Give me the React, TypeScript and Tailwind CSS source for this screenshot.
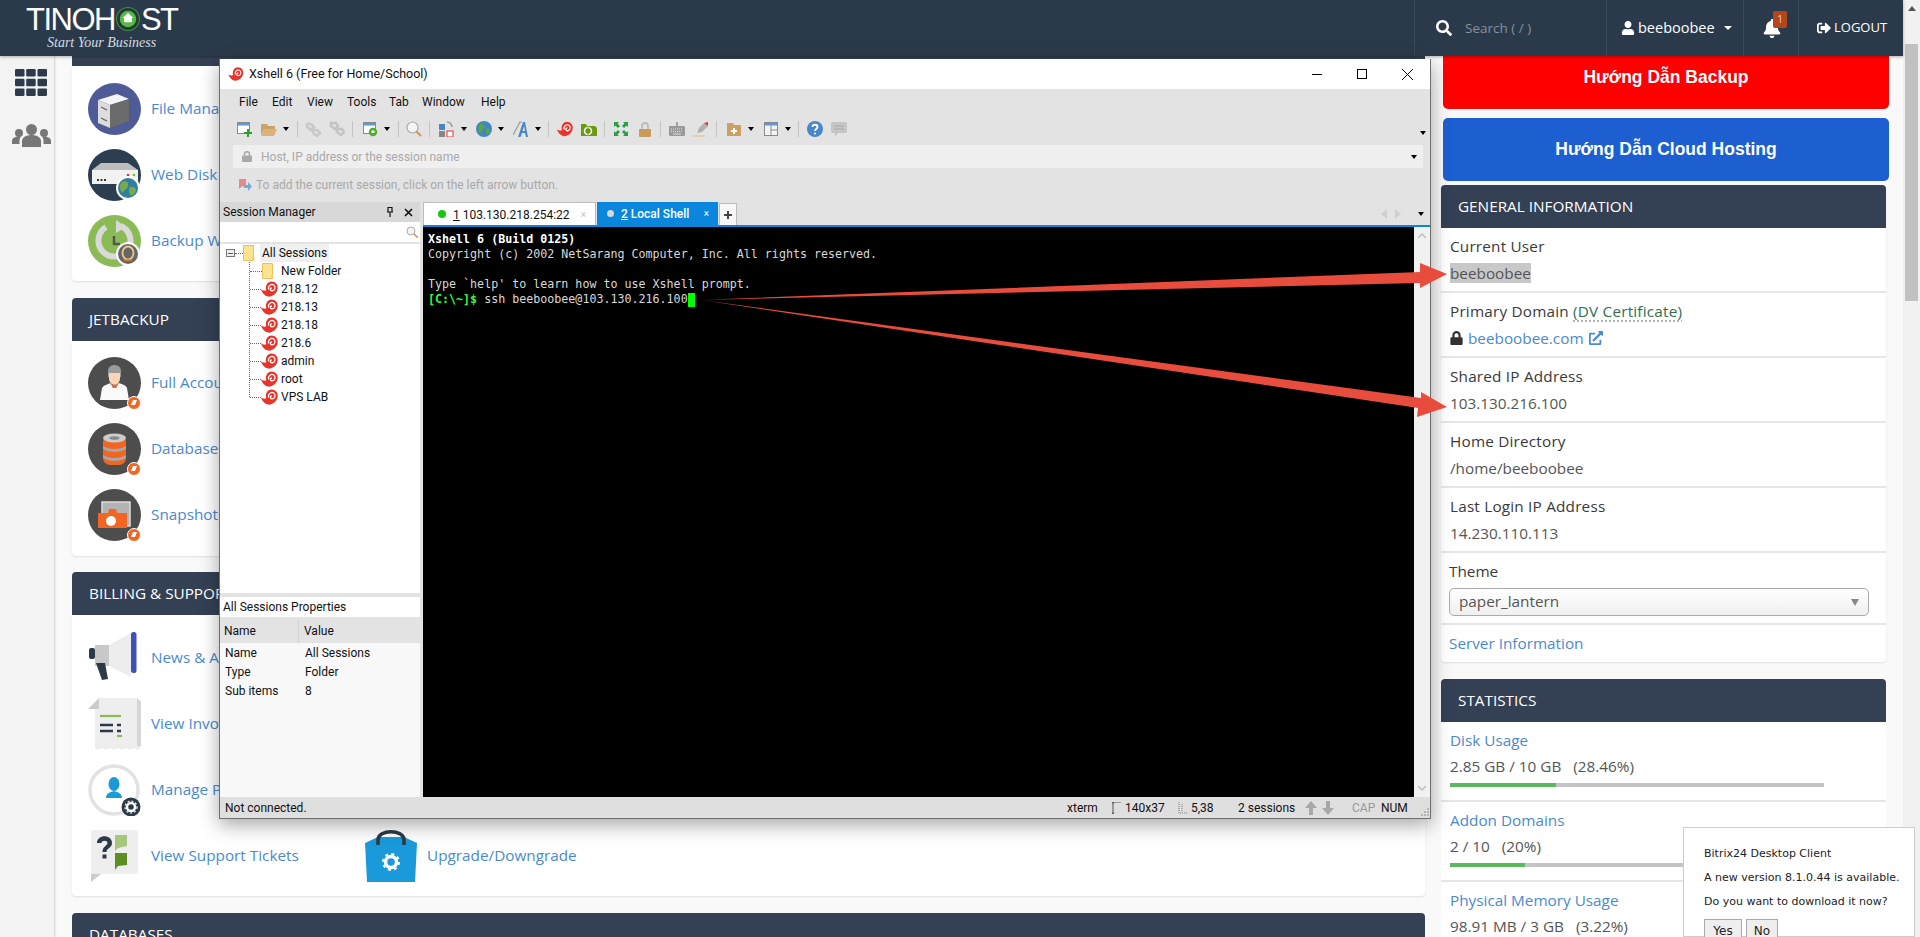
import React from "react";
import { FaSearch, FaUser, FaBell, FaSignOutAlt, FaLock, FaExternalLinkAlt } from "react-icons/fa";

const Snail = ({ className = "w-[16px] h-[16px]" }: { className?: string }) => (
  <svg viewBox="0 2 48 45" className={className}>
    <path fill="#e8352b" d="M0 26C8 30 12 30 15 28C11 18 17 3 30 3C42 3 49 14 47 24C45 38 32 47 20 46C10 44 3 36 0 26Z" />
    <path fill="none" stroke="#fff" strokeWidth="3.5" d="M22 26C18 16 29 9 36 13C43 18 39 30 31 30C25 30 25 21 31 21" />
  </svg>
);
const Folder = ({ className = "" }: { className?: string }) => (
  <svg viewBox="0 0 12 16" className={className}>
    <path fill="#fde28f" stroke="#e8c35c" strokeWidth="1" d="M.5.5h10v15H.5z" />
    <path fill="#f2cf6b" d="M9 12h2.5v3.5H9z" />
  </svg>
);
const Caret = () => <span className="block w-0 h-0 shrink-0 border-x-[3px] border-t-[4px] border-x-transparent border-t-black" />;
const Sep = () => <span className="block w-px h-[16px] shrink-0 bg-[#c4c4c4]" />;

const Frame = ({ children, className = "w-[53px] h-[52px]", vb = "0 0 53 52" }: { children: React.ReactNode; className?: string; vb?: string }) => (
  <svg viewBox={vb} className={"shrink-0 " + className}>{children}</svg>
);
const OrangeBadge = () => (
  <g>
    <circle cx="46" cy="46" r="6.5" fill="#f26522" stroke="#fff" strokeWidth="1" />
    <path d="M43 48l2-5h4l-2 5z" fill="#fff" />
  </g>
);
const FileMgr = () => (
  <Frame>
    <ellipse cx="26.5" cy="26" rx="26.5" ry="26" fill="#4f5b96" />
    <path d="M10 17l19-6 12 5-19 6z" fill="#f4f4f4" />
    <path d="M10 17l12 5v23l-12-5z" fill="#dcdcdc" />
    <path d="M22 22l19-6v22l-19 7z" fill="#6b6b6b" />
    <path d="M13 24l6 3M13 35l6 3" stroke="#666" strokeWidth="1.3" />
  </Frame>
);
const WebDisk = () => (
  <Frame>
    <ellipse cx="26.5" cy="26" rx="26.5" ry="26" fill="#2c3e50" />
    <path d="M4 21l9-7h27l10 7z" fill="#bdbdbd" />
    <rect x="4" y="21" width="46" height="14" fill="#f1f1f1" />
    <path d="M9 31h2M12.500 31h2M16 31h2" stroke="#333" strokeWidth="2" />
    <circle cx="40" cy="26" r="1.300" fill="#d33" /><circle cx="46" cy="26" r="1.300" fill="#7b3" />
    <circle cx="40" cy="39" r="12" fill="#fff" />
    <circle cx="40" cy="39" r="10" fill="#2f7f9f" />
    <path d="M34 33c4-2 7 0 6 4s-4 3-5 7c-3-2-5-7-1-11zM42 38c3-1 6 0 6 3s-3 5-5 6c-2-3-3-6-1-9z" fill="#7aa84e" />
  </Frame>
);
const Backup = () => (
  <Frame>
    <ellipse cx="26.5" cy="26" rx="26.5" ry="26" fill="#8abb55" />
    <path d="M33 11a16 16 0 1 1-15 1" fill="none" stroke="#d9d9d9" strokeWidth="6" />
    <path d="M28 5l10 7-10 6z" fill="#d9d9d9" />
    <circle cx="26.500" cy="27" r="9" fill="#8abb55" />
    <path d="M26 21v8h6" fill="none" stroke="#555" strokeWidth="2.500" />
    <circle cx="40" cy="39" r="12" fill="#fff" />
    <circle cx="40" cy="39" r="10" fill="#666" />
    <ellipse cx="40" cy="38" rx="5.500" ry="6.500" fill="none" stroke="#e8c88a" strokeWidth="1.800" />
    <path d="M36 45h8" stroke="#e67e22" strokeWidth="1.500" />
  </Frame>
);
const Account = () => (
  <Frame>
    <ellipse cx="26.500" cy="26" rx="26.500" ry="26" fill="#4d4d4d" />
    <path d="M20 14c0-8 13-8 13 0v6H20z" fill="#9a9a9a" />
    <path d="M21 16h11v5c0 9-11 9-11 0z" fill="#fbd5b5" />
    <path d="M12 43l2-12c2-3 7-4 8-5l4 3 5-3c2 1 7 2 8 5l2 12z" fill="#fafafa" />
    <path d="M22 26l4 3 5-3-3 5h-3z" fill="#e8622c" />
    <OrangeBadge />
  </Frame>
);
const Database = () => (
  <Frame>
    <ellipse cx="26.500" cy="26" rx="26.500" ry="26" fill="#4d4d4d" />
    <rect x="15" y="12" width="23" height="30" rx="7" fill="#f26522" />
    <ellipse cx="26.500" cy="15" rx="11.500" ry="4.500" fill="#ccc" />
    <ellipse cx="26.500" cy="15" rx="5" ry="1.800" fill="#888" />
    <path d="M15 23c6 4 17 4 23 0v3c-6 4-17 4-23 0zM15 32c6 4 17 4 23 0v3c-6 4-17 4-23 0z" fill="#a7a7a7" />
    <OrangeBadge />
  </Frame>
);
const Snapshot = () => (
  <Frame>
    <ellipse cx="26.500" cy="26" rx="26.500" ry="26" fill="#4d4d4d" />
    <rect x="14" y="13" width="28" height="24" fill="#b3b3b3" stroke="#ddd" strokeWidth="1.500" />
    <path d="M10 24h10l1-4h7l1 4h10v15H10z" fill="#f26522" />
    <circle cx="23" cy="32" r="5" fill="#fff" />
    <OrangeBadge />
  </Frame>
);
const News = () => (
  <Frame>
    <path d="M7 13h14v21H7z" fill="#c8c8c8" />
    <path d="M21 13L43 1v44L21 34z" fill="#ededed" />
    <rect x="43" y="0" width="5.500" height="41" rx="2.500" fill="#3f51b5" />
    <rect x="1" y="16" width="6" height="11" rx="2" fill="#2c3a47" />
    <path d="M8 31h9l3 16-6 1z" fill="#2c3a47" />
  </Frame>
);
const Invoice = () => (
  <Frame>
    <path d="M11 0h38l4 3v46l-3 3-4-2-4 2-4-2-4 2-4-2-4 2-4-2-4 2-4-2-4 2-3-2V11z" fill="#eee" />
    <path d="M0 11L11 0v11z" fill="#ccc" />
    <path d="M49 0l4 4v44h-4z" fill="#d6d6d6" />
    <path d="M12 18h21" stroke="#8abb55" strokeWidth="2.200" />
    <path d="M12 27h13M12 33h13" stroke="#2c3a47" strokeWidth="2.500" />
    <path d="M29 27h5M29 33h5" stroke="#2c3a47" strokeWidth="2.500" strokeDasharray="4 1" />
    <path d="M29 38h5" stroke="#8abb55" strokeWidth="2.200" />
  </Frame>
);
const Profile = () => (
  <Frame>
    <circle cx="26" cy="26" r="24" fill="#fff" stroke="#e2e2e2" strokeWidth="3.500" />
    <ellipse cx="26" cy="20" rx="5.500" ry="7" fill="#1c9ad6" />
    <path d="M18 34c0-5 5-6 8-7 3 1 8 2 8 7z" fill="#1c9ad6" />
    <circle cx="43" cy="43" r="9.500" fill="#2c3a47" />
    <circle cx="43" cy="43" r="4" fill="none" stroke="#fff" strokeWidth="2.500" />
    <circle cx="43" cy="43" r="6" fill="none" stroke="#fff" strokeWidth="1.200" strokeDasharray="2 2" />
  </Frame>
);
const Ticket = () => (
  <Frame>
    <rect x="3" y="0" width="47" height="44" rx="2" fill="#eee" />
    <path d="M3 44h10L3 52z" fill="#ccc" />
    <path d="M9 13c0-9 15-9 15 0 0 5-5.500 5-5.500 9h-4c0-6 5-6 5-9 0-3-6-3-6 0zM14.500 24.500h4v4h-4z" fill="#2c3a47" />
    <path d="M27 5h12v11l-9 2-3 3z" fill="#a5c87c" />
    <path d="M27 23h12v12l-9 1-3 4z" fill="#5b8f22" />
  </Frame>
);
const Bag = () => (
  <Frame className="w-[54px] h-[52px]" vb="0 0 54 52">
    <path d="M1 13L14 7h26l13 6-2 39H3z" fill="#1a9ada" />
    <path d="M14 15V10c0-11 26-11 26 0v5" fill="none" stroke="#2c3a47" strokeWidth="3.500" />
    <circle cx="27" cy="32" r="5.500" fill="none" stroke="#fff" strokeWidth="3.500" />
    <circle cx="27" cy="32" r="8" fill="none" stroke="#fff" strokeWidth="2" strokeDasharray="3 3.300" />
  </Frame>
);

const IconRow = ({ icon, label, extra }: { icon: React.ReactNode; label: string; extra?: React.ReactNode }) => (
  <div className="flex items-center h-[52px] text-[#4a8acd]">
    <div className="flex items-center gap-[10px] w-[276px] shrink-0">
      {icon}
      <span className="pb-[2px]">{label}</span>
    </div>
    {extra}
  </div>
);

const PanelHead = ({ title, children }: { title: string; children?: React.ReactNode }) => (
  <div className="flex items-center justify-between h-[43px] bg-[#344154] text-white rounded-t-[4px] pl-[17px]">
    <span>{title}</span>
    {children}
  </div>
);

const InfoRow = ({ label, children }: { label: React.ReactNode; children: React.ReactNode }) => (
  <div className="h-[65px] border-b-2 border-[#e6e6e6] px-[9px] pt-[8px] flex flex-col gap-[7px]">
    <div className="h-[20px] leading-[20px] text-[#3a3a3a] font-medium tracking-[0.2px]">{label}</div>
    <div className="h-[20px] leading-[20px] text-[#555] flex items-center">{children}</div>
  </div>
);

const Stat = ({ title, value, pct, bar }: { title: string; value: string; pct: string; bar?: React.ReactNode }) => (
  <div className={"h-[80px] px-[9px] pt-[8px] " + (bar ? "border-b-2 border-[#e6e6e6]" : "")}>
    <div className="h-[20px] leading-[20px] text-[#4a8acd]">{title}</div>
    <div className="h-[20px] leading-[20px] mt-[6px] text-[#555] flex gap-[12px]"><span>{value}</span><span>{pct}</span></div>
    {bar}
  </div>
);

const Bar = ({ widthClass }: { widthClass: string }) => (
  <div className="h-[4px] w-[374px] mt-[7px] bg-[#c4c4c4]"><div className={"h-full bg-[#5cb85c] " + widthClass} /></div>
);

const Tree = ({ label }: { label: string }) => (
  <div className="flex items-center h-[18px]">
    <span className="w-[11px] border-t border-dotted border-[#666] shrink-0" />
    <Snail className="w-[17px] h-[16px] shrink-0" />
    <span className="ml-[3px]">{label}</span>
  </div>
);

const Toolbar = () => (
  <div className="h-[29px] flex items-center pb-[3px]">
    <svg viewBox="0 0 15 15" className="ml-[17px] w-[15px] h-[15px]"><rect x=".5" y=".5" width="12" height="11" fill="#fff" stroke="#8a8a8a" /><rect x="1" y="1" width="11" height="2.500" fill="#5b9bd5" /><path d="M11 7v8M7 11h8" stroke="#2aa02a" strokeWidth="2" /></svg>
    <svg viewBox="0 0 16 13" className="ml-[9px] w-[16px] h-[13px]"><path d="M0 1h6l1 2h7v3H3L0 12z" fill="#c9a16a" /><path d="M3 6h13l-3 7H0z" fill="#dcb27a" /></svg>
    <span className="ml-[6px]"><Caret /></span>
    <span className="ml-[8px]"><Sep /></span>
    <svg viewBox="0 0 16 16" className="ml-[7px] w-[16px] h-[16px]"><path d="M2 3l4 0 3 3-3 3-4-3zM8 9l4 0 3 3-3 3-4-3z" fill="none" stroke="#c8c8c8" strokeWidth="2.500" /></svg>
    <svg viewBox="0 0 16 16" className="ml-[8px] w-[16px] h-[16px]"><path d="M2 2l5 0 2 3-3 3-4-3zM8 8l5 0 2 3-3 3-4-3z" fill="none" stroke="#c4c4c4" strokeWidth="2.500" /></svg>
    <span className="ml-[7px]"><Sep /></span>
    <svg viewBox="0 0 15 15" className="ml-[10px] w-[15px] h-[15px]"><rect x=".5" y=".5" width="12" height="11" fill="#fff" stroke="#8a8a8a" /><rect x="1" y="1" width="11" height="2.500" fill="#5b9bd5" /><circle cx="10" cy="10" r="3" fill="none" stroke="#4caf2a" strokeWidth="2.500" /></svg>
    <span className="ml-[6px]"><Caret /></span>
    <span className="ml-[8px]"><Sep /></span>
    <svg viewBox="0 0 16 16" className="ml-[7px] w-[16px] h-[16px]"><circle cx="6.500" cy="6.500" r="5.500" fill="#f4f4f4" stroke="#aaa" strokeWidth="1.200" /><path d="M10.500 10.500L15 15" stroke="#d49a55" strokeWidth="2.200" /></svg>
    <span className="ml-[7px]"><Sep /></span>
    <svg viewBox="0 0 15 16" className="ml-[9px] w-[15px] h-[16px]"><rect x="0" y="3" width="6" height="6" fill="#4a87c8" /><rect x="0" y="10" width="6" height="6" fill="#888" /><rect x="8" y="10" width="6" height="6" fill="#fff" stroke="#d33" /><path d="M8 1a5 5 0 0 1 5 5" fill="none" stroke="#999" strokeWidth="1.500" /></svg>
    <span className="ml-[7px]"><Caret /></span>
    <svg viewBox="0 0 16 16" className="ml-[9px] w-[16px] h-[16px]"><circle cx="8" cy="8" r="8" fill="#3f86c9" /><path d="M4 3c3-1 5 1 4 4s-3 2-3 6c-3-2-4-7-1-10zM11 7c2 0 3 1 3 3s-2 3-3 4c-1-2-2-5 0-7z" fill="#59a545" /></svg>
    <span className="ml-[6px]"><Caret /></span>
    <svg viewBox="0 0 16 16" className="ml-[9px] w-[16px] h-[16px]"><path d="M0 14L7 1h2" fill="none" stroke="#999" strokeWidth="1.200" /><path d="M5 16L10 1h2l3 15h-2l-1-4H9l-1.500 4zM9.500 10h2.500L11.200 5z" fill="#4a87c8" /></svg>
    <span className="ml-[6px]"><Caret /></span>
    <span className="ml-[7px]"><Sep /></span>
    <span className="ml-[8px]"><Snail /></span>
    <svg viewBox="0 0 16 13" className="ml-[8px] w-[16px] h-[13px]"><path d="M0 1h5l1 2h8l2 2v8H0z" fill="#6a9a12" /><circle cx="7" cy="8" r="3.500" fill="none" stroke="#fff" strokeWidth="1.500" /><path d="M7 4v8" stroke="#6a9a12" strokeWidth="1" /></svg>
    <span className="ml-[7px]"><Sep /></span>
    <svg viewBox="0 0 14 14" className="ml-[9px] w-[14px] h-[14px]" fill="#27a042"><path d="M0 0h5L3.500 1.500 6 4 4 6 1.500 3.500 0 5zM14 0v5l-1.500-1.500L10 6 8 4l2.500-2.500L9 0zM0 14V9l1.500 1.500L4 8l2 2-2.500 2.500L5 14zM14 14H9l1.500-1.500L8 10l2-2 2.500 2.500L14 9z" /></svg>
    <svg viewBox="0 0 12 15" className="ml-[11px] w-[12px] h-[15px]"><path d="M3 7V4c0-4 6-4 6 0v3" fill="none" stroke="#bbb" strokeWidth="1.800" /><rect x="0" y="7" width="12" height="8" rx="1" fill="#c89a5c" /></svg>
    <span className="ml-[9px]"><Sep /></span>
    <svg viewBox="0 0 16 14" className="ml-[8px] w-[16px] h-[14px]"><path d="M8 0v4" stroke="#777" strokeWidth="1.200" /><rect x="0" y="4" width="16" height="10" rx="1" fill="#9a9a9a" /><path d="M2 7h12M2 9.500h12" stroke="#e3e3e3" strokeDasharray="1 1" /><path d="M4 12h8" stroke="#e3e3e3" /></svg>
    <svg viewBox="0 0 16 15" className="ml-[8px] w-[16px] h-[15px]"><path d="M4 11l2-5 5-5 4 3-6 6z" fill="#b0b0b0" /><path d="M11 1l4-1v4z" fill="#e0303a" /><path d="M0 14h12" stroke="#eec27e" strokeWidth="1.200" /></svg>
    <span className="ml-[7px]"><Sep /></span>
    <svg viewBox="0 0 14 13" className="ml-[10px] w-[14px] h-[13px]"><path d="M0 0h6l1 2h7v11H0z" fill="#cc9f62" /><path d="M7 5v6M4 8h6" stroke="#fff" strokeWidth="2" /></svg>
    <span className="ml-[7px]"><Caret /></span>
    <svg viewBox="0 0 14 14" className="ml-[10px] w-[14px] h-[14px]"><rect x=".5" y=".5" width="13" height="13" fill="#f4f4f4" stroke="#8a8a8a" /><rect x="1" y="1" width="12" height="2.500" fill="#5b9bd5" /><path d="M7 3v10M7 8h6" stroke="#8a8a8a" /></svg>
    <span className="ml-[7px]"><Caret /></span>
    <span className="ml-[7px]"><Sep /></span>
    <svg viewBox="0 0 16 16" className="ml-[8px] w-[16px] h-[16px]"><circle cx="8" cy="8" r="8" fill="#4a87c8" /><path d="M5.500 6c0-3 5-3 5 0 0 2-2.500 2-2.500 4" fill="none" stroke="#fff" strokeWidth="1.800" /><circle cx="8" cy="12.500" r="1.100" fill="#fff" /></svg>
    <svg viewBox="0 0 16 15" className="ml-[8px] w-[16px] h-[15px]"><path d="M1 0h14l1 1v9l-1 1H7l-3 4v-4H1l-1-1V1z" fill="#c6c6c6" /><path d="M3 4h10M3 7h10" stroke="#a8a8a8" strokeWidth="1.200" /></svg>
    <span className="ml-auto mr-[4px] mt-[8px]"><Caret /></span>
  </div>
);

const XshellWindow = () => (
  <div className="absolute left-[219px] top-[59px] w-[1212px] h-[760px] z-20 bg-[#e3e3e3] border-x border-b border-[#6f6f6f] shadow-[0_6px_18px_rgba(0,0,0,0.35)] flex flex-col font-['Roboto'] text-[12px] text-[#111]">
    <div className="h-[30px] bg-white flex items-center shrink-0">
      <Snail className="ml-[8px] w-[16px] h-[14px]" />
      <span className="ml-[5px] text-[12.500px]">Xshell 6 (Free for Home/School)</span>
      <div className="ml-auto flex items-center mr-[17px] gap-[35px]">
        <span className="w-[10px] h-px bg-black" />
        <span className="w-[10px] h-[10px] border border-black" />
        <svg viewBox="0 0 11 11" className="w-[11px] h-[11px]"><path d="M0 0l11 11M11 0L0 11" stroke="#000" strokeWidth="1" /></svg>
      </div>
    </div>
    <div className="h-[27px] flex items-center pl-[19px] pb-[2px] shrink-0">
      <span className="w-[33px]">File</span>
      <span className="w-[35px]">Edit</span>
      <span className="w-[40px]">View</span>
      <span className="w-[42px]">Tools</span>
      <span className="w-[33px]">Tab</span>
      <span className="w-[59px]">Window</span>
      <span>Help</span>
    </div>
    <Toolbar />
    <div className="h-[23px] ml-[13px] mr-[7px] bg-[#efefef] flex items-center text-[#a9a9a9] shrink-0">
      <svg viewBox="0 0 10 11" className="ml-[9px] w-[10px] h-[11px]"><path d="M2.500 5V3c0-3 5-3 5 0v2" fill="none" stroke="#a9a9a9" strokeWidth="1.500" /><rect y="4.500" width="10" height="6.500" rx="1" fill="#a9a9a9" /></svg>
      <span className="ml-[9px]">Host, IP address or the session name</span>
      <span className="ml-auto mr-[6px]"><Caret /></span>
    </div>
    <div className="h-[34px] flex items-center text-[#a9a9a9] shrink-0">
      <svg viewBox="0 0 13 13" className="ml-[19px] w-[13px] h-[13px]"><path d="M0 0h7v9L3.500 7 0 10z" fill="#e58a8a" /><path d="M5 6h4V3l4 4.500L9 12V9H5z" fill="#7aa9d8" /></svg>
      <span className="ml-[4px]">To add the current session, click on the left arrow button.</span>
    </div>
    <div className="h-[595px] flex shrink-0">
      <div className="w-[200px] flex flex-col shrink-0">
        <div className="h-[20px] bg-[#d8d8d8] flex items-center pl-[3px] pr-[7px] shrink-0">
          <span>Session Manager</span>
          <svg viewBox="0 0 8 10" className="ml-auto w-[8px] h-[10px]"><path d="M2 0v5M6 0v5M1 5h6M4 5v5M2 .5h4" stroke="#111" strokeWidth="1.200" fill="none" /></svg>
          <svg viewBox="0 0 9 9" className="ml-[10px] w-[9px] h-[9px]"><path d="M1 1l7 7M8 1L1 8" stroke="#111" strokeWidth="1.600" /></svg>
        </div>
        <div className="h-[20px] bg-white flex items-center justify-end pr-[2px] shrink-0">
          <svg viewBox="0 0 12 12" className="w-[12px] h-[12px]"><circle cx="5" cy="5" r="4" fill="#f4f4f4" stroke="#aaa" /><path d="M8 8l4 4" stroke="#d49a55" strokeWidth="1.600" /></svg>
        </div>
        <div className="h-[2px] bg-[#e3e3e3] shrink-0" />
        <div className="h-[349px] bg-white pl-[6px] shrink-0">
          <div className="flex items-center h-[18px]">
            <span className="w-[9px] h-[8px] border border-[#777] bg-[#eee] flex items-center justify-center shrink-0"><span className="w-[5px] h-px bg-[#35c]" /></span>
            <span className="w-[8px] border-t border-dotted border-[#666] shrink-0" />
            <Folder className="w-[12px] h-[16px] shrink-0" />
            <span className="ml-[5px] bg-[#f0f0f0] px-[2px] h-[18px] leading-[18px]">All Sessions</span>
          </div>
          <div className="ml-[23px] border-l border-dotted border-[#666] h-[135px]">
            <div className="flex items-center h-[18px]">
              <span className="w-[12px] border-t border-dotted border-[#666] shrink-0" />
              <Folder className="w-[12px] h-[16px] shrink-0" />
              <span className="ml-[7px]">New Folder</span>
            </div>
            <Tree label="218.12" />
            <Tree label="218.13" />
            <Tree label="218.18" />
            <Tree label="218.6" />
            <Tree label="admin" />
            <Tree label="root" />
            <Tree label="VPS LAB" />
          </div>
        </div>
        <div className="h-[4px] shrink-0" />
        <div className="h-[20px] bg-white flex items-center pl-[3px] shrink-0">All Sessions Properties</div>
        <div className="h-[2px] shrink-0" />
        <div className="h-[24px] flex items-center shrink-0">
          <span className="w-[79px] pl-[4px] h-full flex items-center border-r border-[#d0d4da]">Name</span>
          <span className="pl-[5px]">Value</span>
        </div>
        <div className="flex-1 bg-[#f8f8f8] pl-[5px]">
          {[["Name", "All Sessions"], ["Type", "Folder"], ["Sub items", "8"]].map(([a, b]) => (
            <div key={a} className="flex h-[19px] items-center">
              <span className="w-[80px]">{a}</span>
              <span>{b}</span>
            </div>
          ))}
        </div>
      </div>
      <div className="w-[3px] shrink-0" />
      <div className="flex-1 flex flex-col">
        <div className="h-[23px] flex items-stretch shrink-0">
          <div className="w-[173px] bg-white border border-b-0 border-[#bdbdbd] flex items-center pl-[14px]">
            <span className="w-[8px] h-[8px] rounded-full bg-[#14c814]" />
            <span className="ml-[7px] pt-[1px]"><span className="underline">1</span> 103.130.218.254:22</span>
            <span className="ml-auto mr-[9px] text-[#c4c4c4] text-[10px]">×</span>
          </div>
          <div className="w-[121px] ml-px bg-[#0a86dc] text-white flex items-center pl-[10px] font-medium">
            <span className="w-[7px] h-[7px] rounded-full bg-[#d8d8d8]" />
            <span className="ml-[7px] pt-[1px]"><span className="underline">2</span> Local Shell</span>
            <span className="ml-auto mr-[9px] text-[10px] font-normal">×</span>
          </div>
          <div className="w-[18px] ml-px mt-px bg-[#f8f8f8] border border-b-0 border-[#bdbdbd] flex items-center justify-center text-[#444]">
            <svg viewBox="0 0 8 8" className="w-[8px] h-[8px]"><path d="M4 0v8M0 4h8" stroke="#444" strokeWidth="2" /></svg>
          </div>
          <div className="ml-auto flex items-center mr-[6px]">
            <span className="w-0 h-0 border-y-[5px] border-r-[6px] border-y-transparent border-r-[#cfcfcf]" />
            <span className="ml-[8px] w-0 h-0 border-y-[5px] border-l-[6px] border-y-transparent border-l-[#cfcfcf]" />
            <span className="ml-[17px]"><Caret /></span>
          </div>
        </div>
        <div className="h-[2px] bg-[#0a86dc] shrink-0" />
        <div className="flex-1 flex">
          <div className="w-[991px] bg-black pt-[5px] pl-[5px] font-['DejaVu_Sans_Mono'] text-[11.67px] leading-[15px] text-[#d8d8d8] whitespace-pre">
            <div className="font-bold text-white">Xshell 6 (Build 0125)</div>
            <div>Copyright (c) 2002 NetSarang Computer, Inc. All rights reserved.</div>
            <div>&nbsp;</div>
            <div>Type `help' to learn how to use Xshell prompt.</div>
            <div className="flex items-center"><span className="text-[#33ff33] font-bold">[C:\~]$</span><span> ssh beeboobee@103.130.216.100</span><span className="w-[7px] h-[14px] bg-[#00ff00]" /></div>
          </div>
          <div className="flex-1 bg-[#f1f1f1] flex flex-col items-center justify-between py-[6px]">
            <svg viewBox="0 0 8 5" className="w-[8px] h-[5px]"><path d="M0 5l4-4 4 4" fill="none" stroke="#bbb" strokeWidth="1.300" /></svg>
            <svg viewBox="0 0 8 5" className="w-[8px] h-[5px]"><path d="M0 0l4 4 4-4" fill="none" stroke="#bbb" strokeWidth="1.300" /></svg>
          </div>
        </div>
      </div>
    </div>
    <div className="flex-1 bg-[#dfdfdf] flex items-center">
      <span className="flex-1 pl-[5px]">Not connected.</span>
      <span className="w-[45px]">xterm</span>
      <span className="w-[66px] flex items-center gap-[3px]"><svg viewBox="0 0 10 12" className="w-[10px] h-[12px]"><path d="M1 0v12M9 0H1M0 1.500L1 0l1 1.500M0 10.500L1 12l1-1.500" fill="none" stroke="#555" /></svg>140x37</span>
      <span className="w-[60px] flex items-center gap-[3px]"><svg viewBox="0 0 10 12" className="w-[10px] h-[12px]"><path d="M1 0v11h9M4 2v7" fill="none" stroke="#777" strokeDasharray="1 1" /></svg>5,38</span>
      <span className="w-[67px]">2 sessions</span>
      <span className="w-[47px] flex items-center gap-[5px]">
        <svg viewBox="0 0 12 14" className="w-[12px] h-[14px]"><path d="M6 0l6 7H8v7H4V7H0z" fill="#a8a8a8" /></svg>
        <svg viewBox="0 0 12 14" className="w-[12px] h-[14px]"><path d="M6 14L0 7h4V0h4v7h4z" fill="#a8a8a8" /></svg>
      </span>
      <span className="w-[29px] text-[#999]">CAP</span>
      <span className="w-[40px]">NUM</span>
      <svg viewBox="0 0 8 8" className="w-[8px] h-[8px] mr-px mt-[8px]"><path d="M6 0h2v2H6zM3 3h2v2H3zM6 3h2v2H6zM0 6h2v2H0zM3 6h2v2H3zM6 6h2v2H6z" fill="#b5b5b5" /></svg>
    </div>
  </div>
);

export default function App() {
  return (
    <div className="relative w-[1920px] h-[937px] overflow-hidden bg-[#f9f9f9] font-['Open_Sans',sans-serif] text-[15.300px] flex">
      <div className="w-[1903px] shrink-0 flex flex-col">
        <header className="relative z-10 h-[56px] shrink-0 bg-[#2b3a4a] text-white flex items-stretch shadow-[0_1px_3px_rgba(0,0,0,0.3)]">
          <div className="w-[1415px] shrink-0 pl-[26px] pt-[5px] border-r border-[#3a4858]">
            <div className="flex items-center h-[28px] font-['Liberation_Sans'] text-[31px] leading-none tracking-[-1.5px]">
              <span>TINOH</span>
              <svg viewBox="0 0 22 22" className="mx-[1px] w-[24px] h-[24px]">
                <circle cx="11" cy="11" r="10.500" fill="#243a30" stroke="#3c8f4a" strokeWidth="1" />
                <circle cx="11" cy="11" r="7.500" fill="#57b947" />
                <path d="M11 5.500l5 4.500h-1.500v4h-7v-4H6z" fill="#fff" />
              </svg>
              <span>ST</span>
            </div>
            <div className="ml-[21px] mt-[2px] font-['Liberation_Serif'] italic text-[14px] leading-[16px] text-[#d5dbe0]">Start Your Business</div>
          </div>
          <div className="w-[192px] shrink-0 flex items-center pl-[21px] border-r border-[#3a4858]">
            <FaSearch className="w-[16px] h-[16px]" />
            <span className="ml-[13px] text-[#8590a0] text-[13.500px]">Search ( / )</span>
          </div>
          <div className="w-[137px] shrink-0 flex items-center pl-[14px] border-r border-[#3a4858] text-[14.500px]">
            <FaUser className="w-[14px] h-[14px]" />
            <span className="ml-[3px]">beeboobee</span>
            <span className="ml-[9px] w-0 h-0 border-x-[4px] border-t-[4px] border-x-transparent border-t-white" />
          </div>
          <div className="relative w-[55px] shrink-0 flex items-center pl-[19px] border-r border-[#3a4858]">
            <FaBell className="w-[18px] h-[19px]" />
            <span className="absolute left-[29px] top-[11px] w-[14px] h-[17px] rounded-[2px] bg-[#b5451b] text-[#e8d0c0] text-[10px] flex items-center justify-center">1</span>
          </div>
          <div className="flex items-center pl-[18px] text-[13px]">
            <FaSignOutAlt className="w-[14px] h-[14px]" />
            <span className="ml-[3px]">LOGOUT</span>
          </div>
        </header>
        <div className="flex-1 flex min-h-0">
          <aside className="w-[54px] shrink-0 bg-[#f3f3f3] shadow-[1px_0_2px_rgba(0,0,0,0.18)] flex flex-col items-center pt-[13px] pl-[8px]">
            <svg viewBox="0 0 32 27" className="w-[32px] h-[27px]" fill="#2d3a4a">
              <rect x="0" y="0" width="9.500" height="7.500" rx="1.300" /><rect x="11.200" y="0" width="9.500" height="7.500" rx="1.300" /><rect x="22.500" y="0" width="9.500" height="7.500" rx="1.300" />
              <rect x="0" y="9.700" width="9.500" height="7.500" rx="1.300" /><rect x="11.200" y="9.700" width="9.500" height="7.500" rx="1.300" /><rect x="22.500" y="9.700" width="9.500" height="7.500" rx="1.300" />
              <rect x="0" y="19.500" width="9.500" height="7.500" rx="1.300" /><rect x="11.200" y="19.500" width="9.500" height="7.500" rx="1.300" /><rect x="22.500" y="19.500" width="9.500" height="7.500" rx="1.300" />
            </svg>
            <svg viewBox="0 0 39 23" className="mt-[28px] w-[39px] h-[23px]" fill="#777">
              <circle cx="19.500" cy="5.500" r="5.500" /><path d="M10 23v-6c0-4 5-6 9.500-6s9.500 2 9.500 6v6z" />
              <circle cx="7" cy="9" r="4" /><path d="M0 20v-3c0-3 3-4.500 7-4.500 1 0 1.500 0 2 .2-1 1-1.500 2.300-1.500 4V20z" />
              <circle cx="32" cy="9" r="4" /><path d="M39 20v-3c0-3-3-4.500-7-4.500-1 0-1.500 0-2 .2 1 1 1.500 2.300 1.500 4V20z" />
            </svg>
          </aside>
          <main className="ml-[18px] w-[1353px] shrink-0 flex flex-col">
            <div className="h-[10px] bg-[#344154] shrink-0" />
            <section className="h-[215px] bg-white rounded-b-[4px] shadow-[0_1px_2px_rgba(0,0,0,0.1)] pl-[16px] pt-[17px] flex flex-col gap-[14px] shrink-0">
              <IconRow icon={<FileMgr />} label="File Manager" />
              <IconRow icon={<WebDisk />} label="Web Disk" />
              <IconRow icon={<Backup />} label="Backup Wizard" />
            </section>
            <section className="mt-[17px] shrink-0">
              <PanelHead title="JETBACKUP" />
              <div className="h-[215px] bg-white rounded-b-[4px] shadow-[0_1px_2px_rgba(0,0,0,0.1)] pl-[16px] pt-[16px] flex flex-col gap-[14px]">
                <IconRow icon={<Account />} label="Full Account Backups" />
                <IconRow icon={<Database />} label="Database Backups" />
                <IconRow icon={<Snapshot />} label="Snapshots" />
              </div>
            </section>
            <section className="mt-[16px] shrink-0">
              <PanelHead title="BILLING & SUPPORT" />
              <div className="h-[281px] bg-white rounded-b-[4px] shadow-[0_1px_2px_rgba(0,0,0,0.1)] pl-[16px] pt-[17px] flex flex-col gap-[14px]">
                <IconRow icon={<News />} label="News & Announcements" />
                <IconRow icon={<Invoice />} label="View Invoices" />
                <IconRow icon={<Profile />} label="Manage Profile" />
                <IconRow icon={<Ticket />} label="View Support Tickets" extra={<div className="flex items-center gap-[9px]"><Bag /><span className="pb-[2px]">Upgrade/Downgrade</span></div>} />
              </div>
            </section>
            <section className="mt-[17px] shrink-0">
              <PanelHead title="DATABASES">
                <span className="mr-[22px] mt-[18px] w-[14px] h-[4px] bg-white" />
              </PanelHead>
            </section>
          </main>
          <div className="ml-[16px] w-[446px] shrink-0 flex flex-col">
            <div className="ml-[2px] w-[446px] h-[53px] pb-[10px] bg-[#ff0000] rounded-b-[5px] text-white font-['Liberation_Sans'] font-bold text-[17.500px] flex items-center justify-center shrink-0">Hướng Dẫn Backup</div>
            <div className="ml-[2px] w-[446px] mt-[9px] h-[63px] bg-[#1d5ed0] rounded-[5px] text-white font-['Liberation_Sans'] font-bold text-[17.500px] flex items-center justify-center shrink-0">Hướng Dẫn Cloud Hosting</div>
            <section className="mt-[4px] w-[445px] shrink-0 shadow-[0_1px_2px_rgba(0,0,0,0.1)] rounded-[4px] bg-white">
              <PanelHead title="GENERAL INFORMATION" />
              <InfoRow label="Current User"><span className="bg-[#c8c8c8]">beeboobee</span></InfoRow>
              <InfoRow label={<>Primary Domain <span className="text-[#2f6f4f] underline decoration-dotted decoration-[#999] underline-offset-4">(DV Certificate)</span></>}>
                <FaLock className="w-[13px] h-[14px] text-[#333]" />
                <span className="ml-[5px] text-[#4a8acd]">beeboobee.com</span>
                <FaExternalLinkAlt className="ml-[5px] w-[14px] h-[14px] text-[#4a8acd]" />
              </InfoRow>
              <InfoRow label="Shared IP Address">103.130.216.100</InfoRow>
              <InfoRow label="Home Directory">/home/beeboobee</InfoRow>
              <InfoRow label="Last Login IP Address">14.230.110.113</InfoRow>
              <div className="h-[72px] border-b-2 border-[#e6e6e6] px-[8px] pt-[8px]">
                <div className="h-[20px] leading-[20px] text-[#3a3a3a] font-medium">Theme</div>
                <div className="mt-[7px] w-[420px] h-[28px] border border-[#aaa] rounded-[5px] bg-gradient-to-b from-white to-[#f0f0f0] flex items-center px-[9px] text-[#555]">
                  <span className="pb-[1px]">paper_lantern</span>
                  <span className="ml-auto w-0 h-0 border-x-[4px] border-t-[7px] border-x-transparent border-t-[#888]" />
                </div>
              </div>
              <div className="h-[37px] flex items-center px-[8px] text-[#4a8acd]">Server Information</div>
            </section>
            <section className="mt-[17px] w-[445px] shrink-0 bg-white">
              <PanelHead title="STATISTICS" />
              <Stat title="Disk Usage" value="2.85 GB / 10 GB" pct="(28.46%)" bar={<Bar widthClass="w-[28.400%]" />} />
              <Stat title="Addon Domains" value="2 / 10" pct="(20%)" bar={<Bar widthClass="w-[20%]" />} />
              <Stat title="Physical Memory Usage" value="98.91 MB / 3 GB" pct="(3.22%)" />
            </section>
          </div>
        </div>
      </div>
      <div className="flex-1 bg-[#f1f1f1] flex flex-col items-center pt-[6px]">
        <span className="w-0 h-0 border-x-[4px] border-b-[5px] border-x-transparent border-b-[#555]" />
        <div className="mt-[33px] w-[13px] h-[257px] bg-[#c1c1c1]" />
      </div>

      <XshellWindow />

      <svg className="absolute left-0 top-0 w-[1920px] h-[937px] z-30 pointer-events-none" viewBox="0 0 1920 937">
        <polygon fill="#e74c3c" points="701,300 1420,272 1420,263 1447,274 1420,288 1420,283" />
        <polygon fill="#e74c3c" points="701,300 1421,398 1421,392 1447,407 1417,417 1418,408" />
      </svg>

      <div className="absolute left-[1683px] top-[827px] w-[232px] h-[110px] z-40 bg-white border border-[#ccc] pl-[20px] pt-[17px] font-['DejaVu_Sans'] text-[11px] text-[#222] flex flex-col gap-[7px]">
        <div className="leading-[17px]">Bitrix24 Desktop Client</div>
        <div className="leading-[17px] whitespace-nowrap">A new version 8.1.0.44 is available.</div>
        <div className="leading-[17px] whitespace-nowrap">Do you want to download it now?</div>
        <div className="flex gap-[4px] mt-[2px]">
          <span className="w-[38px] h-[24px] bg-[#eee] border border-[#aaa] flex items-center justify-center text-[12px]">Yes</span>
          <span className="w-[32px] h-[24px] bg-[#eee] border border-[#aaa] flex items-center justify-center text-[12px]">No</span>
        </div>
      </div>
    </div>
  );
}
